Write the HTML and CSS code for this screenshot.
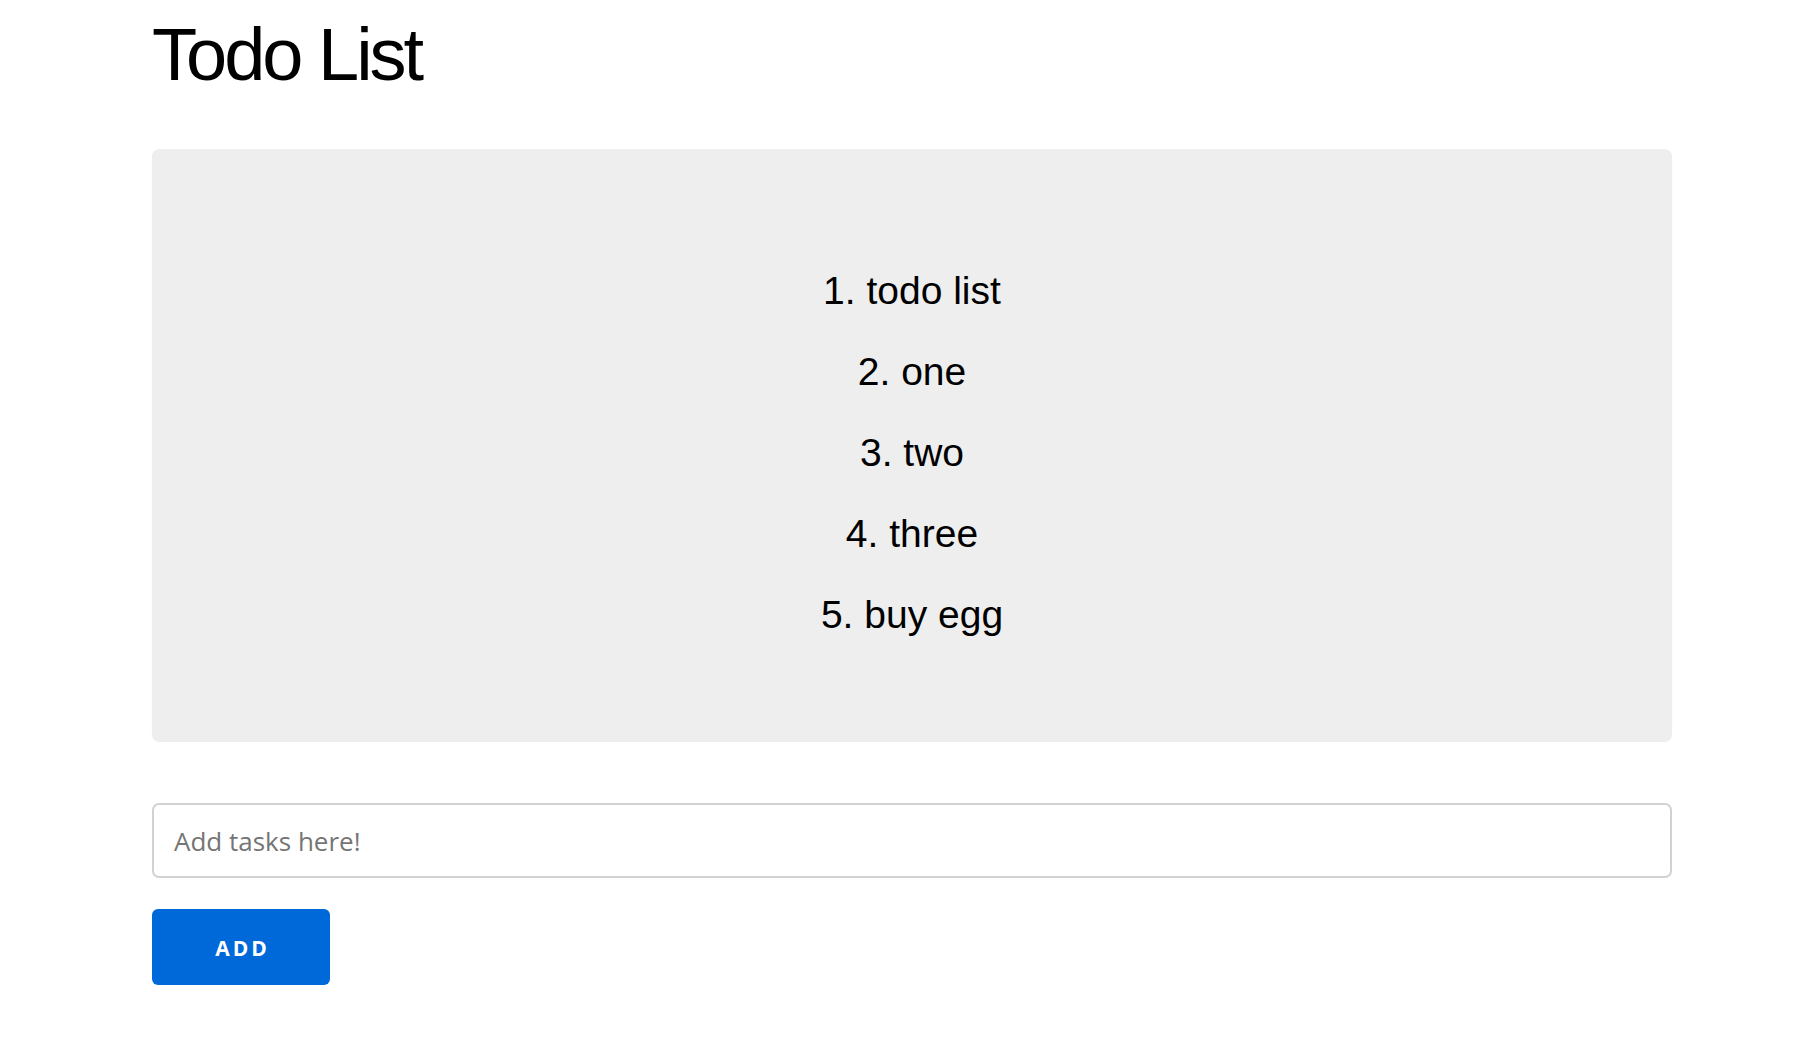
FILE: index.html
```html
<!DOCTYPE html>
<html lang="en">
<head>
<meta charset="utf-8">
<title>Todo List</title>
<link rel="stylesheet" href="styles.css">
</head>
<body>
<main class="app">
  <h1 class="title">Todo List</h1>
  <section class="card">
    <ol class="tasks">
      <li>todo list</li>
      <li>one</li>
      <li>two</li>
      <li>three</li>
      <li>buy egg</li>
    </ol>
  </section>
  <form class="add-form">
    <input class="task-input" type="text" placeholder="Add tasks here!">
    <button class="add-btn" type="button">ADD</button>
  </form>
</main>
</body>
</html>
```

FILE: styles.css
```css
html, body {
  margin: 0;
  padding: 0;
  background: #ffffff;
}

body {
  font-family: "Liberation Sans", Arial, Helvetica, sans-serif;
  color: #000;
}

.app {
  width: 1520px;
  margin-left: 152px;
  display: flex;
  flex-direction: column;
}

.title {
  margin: 18px 0 0 0;
  font-size: 74px;
  line-height: 74px;
  font-weight: 400;
  letter-spacing: -3px;
}

.card {
  margin-top: 57px;
  background: #eeeeee;
  border-radius: 8px;
  box-shadow: 0 1px 1px rgba(0, 0, 0, 0.08);
  padding: 101px 0 86px;
  display: flex;
  justify-content: center;
}

.tasks {
  margin: 0;
  padding: 0;
  list-style-position: inside;
  text-align: center;
  font-size: 39px;
  line-height: 81px;
}

.add-form {
  margin: 62px 0 0 0;
  display: flex;
  flex-direction: column;
  align-items: flex-start;
  gap: 31px;
}

.task-input {
  box-sizing: border-box;
  width: 100%;
  height: 75px;
  border: 2px solid #d2d2d2;
  border-radius: 7px;
  padding: 0 20px;
  font-family: "Open Sans", "Noto Sans", sans-serif;
  font-size: 26px;
  color: #333;
  outline: none;
}

.task-input::placeholder {
  color: #757575;
}

.add-btn {
  width: 178px;
  height: 76px;
  border: none;
  border-radius: 6px;
  background: #0069d9;
  color: #ffffff;
  font-family: "Open Sans", "Noto Sans", sans-serif;
  font-weight: 700;
  font-size: 21px;
  letter-spacing: 3px;
  padding: 2px 0 0 3px;
  cursor: pointer;
}
```
